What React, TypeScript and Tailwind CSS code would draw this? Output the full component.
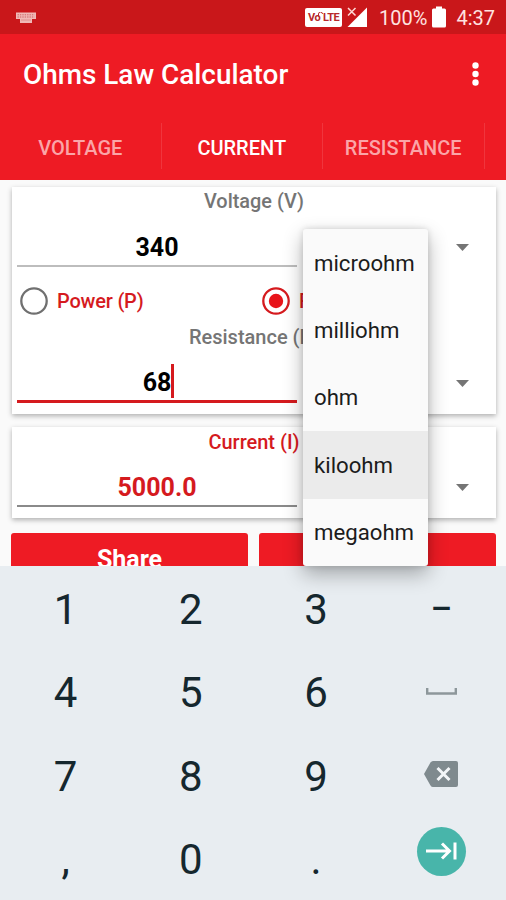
import { useState, ReactNode } from 'react'
import clsx from 'clsx'

const TABS = ['VOLTAGE', 'CURRENT', 'RESISTANCE']
const UNITS = ['microohm', 'milliohm', 'ohm', 'kiloohm', 'megaohm']

function StatusBar() {
  return (
    <div className="flex h-[34px] items-center bg-[#c9171a] text-[#ffe3e0]">
      <svg className="ml-4 mt-px" width="20" height="12" viewBox="0 0 20 12">
        <path d="M0 0.5h20v6.5h-4v4H4V7H0z" fill="#f0b9b6" />
        <path d="M1.5 2.8h17M1.5 5h17" stroke="#c9575a" strokeWidth="0.9" strokeDasharray="1.4 1" />
        <path d="M5 8h10" stroke="#d98583" strokeWidth="0.8" />
      </svg>
      <div className="ml-auto flex h-[19px] w-[37px] items-center justify-center rounded-[2px] bg-white text-[11px] font-bold leading-none tracking-[-0.6px] text-[#b8282b]">
        Vo
        <svg className="-ml-[2px] -mt-[6px]" width="5" height="5" viewBox="0 0 5 5">
          <path d="M0.5 4.5V2a2 2 0 0 1 4 0" fill="none" stroke="#b8282b" strokeWidth="1" />
        </svg>
        LTE
      </div>
      <svg className="ml-[5px]" width="20" height="20" viewBox="0 0 20 20">
        <path d="M20 0.5V20H0.5z" fill="#fff" />
        <path d="M1 1l7.500 7.500M8.500 1L1 8.500" stroke="#ffd9d6" strokeWidth="1.500" />
      </svg>
      <span className="ml-3 pt-[2px] text-[20px] leading-none">100%</span>
      <svg className="ml-[5px]" width="14" height="22" viewBox="0 0 14 22">
        <path d="M4 0.5h6V2.5h2.5q1.5 0 1.5 1.5V20q0 1.500-1.500 1.500H1.500Q0 21.500 0 20V4q0-1.500 1.500-1.500H4z" fill="#fff" />
      </svg>
      <span className="ml-[10px] mr-[11px] pt-[2px] text-[20px] leading-none">4:37</span>
    </div>
  )
}

function Caret() {
  return (
    <svg className="mr-[27px] mt-1" width="13" height="7" viewBox="0 0 13 7">
      <path d="M0 0h13L6.500 7z" fill="#757575" />
    </svg>
  )
}

function Field({ children, lineClass }: { children: ReactNode; lineClass: string }) {
  return (
    <div className="flex h-[44px] items-center justify-between">
      <div className={clsx('ml-[5px] flex h-[44px] w-[280px] items-center justify-center text-[25px] font-bold leading-none', lineClass)}>
        {children}
      </div>
      <Caret />
    </div>
  )
}

function Radio({ checked, label, onClick }: { checked: boolean; label: string; onClick: () => void }) {
  return (
    <button
      className="flex w-[234px] items-center whitespace-nowrap pt-px text-[20px] font-medium tracking-[-0.2px] text-[#d51a1e]"
      onClick={onClick}
    >
      <svg className="mr-[9px] shrink-0" width="28" height="28" viewBox="0 0 28 28">
        <circle cx="14" cy="14" r="12.700" fill="none" stroke={checked ? '#d51a1e' : '#707070'} strokeWidth="2.300" />
        {checked && <circle cx="14" cy="14" r="7.200" fill="#e8141a" />}
      </svg>
      {label}
    </button>
  )
}

function Key({ children }: { children: ReactNode }) {
  return <button className="flex items-center justify-center pt-[4px] text-[42px] leading-none">{children}</button>
}

export default function App() {
  const [tab, setTab] = useState('CURRENT')
  const [known, setKnown] = useState('resistance')
  const [unit, setUnit] = useState('kiloohm')

  return (
    <div className="relative flex h-[900px] w-[506px] flex-col overflow-hidden bg-[#fafafa] font-['Roboto',sans-serif]">
      <StatusBar />

      {/* App bar */}
      <header className="h-[146px] bg-[#ee1b24] text-white">
        <div className="flex h-[82px] items-center justify-between pl-[23px] pr-[27px]">
          <h1 className="text-[27.900px] font-medium leading-none">Ohms Law Calculator</h1>
          <svg className="-mt-[2px]" width="7" height="24" viewBox="0 0 7 24">
            <circle cx="3.500" cy="3.500" r="3.200" fill="#fff" />
            <circle cx="3.500" cy="12" r="3.200" fill="#fff" />
            <circle cx="3.500" cy="20.500" r="3.200" fill="#fff" />
          </svg>
        </div>
        <nav className="flex h-[60px] items-center">
          {TABS.map((name) => (
            <button
              key={name}
              onClick={() => setTab(name)}
              className={clsx(
                'h-[46px] w-[161.500px] border-r border-[#f0353d] pt-[3px] text-[20px] font-medium',
                tab === name ? 'text-white' : 'text-[#fba5a8]'
              )}
            >
              {name}
            </button>
          ))}
        </nav>
      </header>

      {/* Form */}
      <main className="h-[386px] overflow-hidden pl-3 pr-[10px] pt-[7px]">
        <section className="h-[227px] bg-white shadow-[0_2px_5px_rgba(0,0,0,0.3)]">
          <div className="h-[36px] pt-[3px] text-center text-[19.900px] font-medium leading-6 text-[#757575]">Voltage (V)</div>
          <Field lineClass="border-b-2 border-[#bdbdbd] pt-[7px] text-black">340</Field>
          <div className="flex h-[67px] items-center justify-between pb-px pl-2">
            <Radio checked={known === 'power'} label="Power (P)" onClick={() => setKnown('power')} />
            <Radio checked={known === 'resistance'} label="Resistance (R)" onClick={() => setKnown('resistance')} />
          </div>
          <div className="-mt-[8px] h-[33px] text-center text-[20px] font-medium leading-[23px] text-[#757575]">Resistance (R)</div>
          <Field lineClass="border-b-[3px] border-[#d51a1e] pt-[5px] text-black">
            68
            <span className="-mr-[3px] -mt-[2px] h-[34px] w-[3px] shrink-0 bg-[#d51a1e]" />
          </Field>
        </section>

        <section className="mt-[13px] h-[91px] bg-white shadow-[0_2px_5px_rgba(0,0,0,0.3)]">
          <div className="h-[36px] pt-[3px] text-center text-[20px] font-medium leading-6 text-[#d51a1e]">Current (I)</div>
          <Field lineClass="border-b-2 border-[#8a8a8a] pt-[7px] text-[#d51a1e]">5000.0</Field>
        </section>

        <div className="-ml-px mt-[15px] flex gap-[11px]">
          <button className="h-[54px] flex-1 rounded-[3px] bg-[#ee1b24] text-[25px] font-bold text-white">Share</button>
          <button className="h-[54px] flex-1 rounded-[3px] bg-[#ee1b24] text-[25px] font-bold text-white" />
        </div>
      </main>

      {/* Numeric keyboard */}
      <div className="grid h-[334px] grid-cols-4 grid-rows-4 bg-[#e8edf1] pl-[3px] pr-[2px] text-[#15272e]">
        <Key>1</Key>
        <Key>2</Key>
        <Key>3</Key>
        <Key>
          <span className="-mt-[2px] text-[33px] font-medium">–</span>
        </Key>
        <Key>4</Key>
        <Key>5</Key>
        <Key>6</Key>
        <Key>
          <svg className="-mt-[4px]" width="31" height="7" viewBox="0 0 31 7">
            <path d="M1.200 0v5.500h28.600V0" fill="none" stroke="#8d979b" strokeWidth="2.400" />
          </svg>
        </Key>
        <Key>7</Key>
        <Key>8</Key>
        <Key>9</Key>
        <Key>
          <svg className="-mt-[5px]" width="34" height="26" viewBox="0 0 34 26">
            <path d="M9 0H32Q34 0 34 2V24Q34 26 32 26H9Q7.500 26 6.500 24.500L0 13L6.500 1.500Q7.500 0 9 0Z" fill="#7f8a8e" />
            <path d="M13.500 7l12 12M25.500 7l-12 12" stroke="#f3f6f8" strokeWidth="3" />
          </svg>
        </Key>
        <Key>,</Key>
        <Key>0</Key>
        <Key>.</Key>
        <Key>
          <span className="-mt-[18px] flex size-[49px] items-center justify-center rounded-full bg-[#48b5aa]">
            <svg width="31" height="18" viewBox="0 0 31 18">
              <path d="M0 9h23M16 1.500L23.500 9L16 16.500M29 0.500v17" fill="none" stroke="#fff" strokeWidth="3" />
            </svg>
          </span>
        </Key>
      </div>

      {/* Unit dropdown */}
      <ul className="absolute left-[302.500px] top-[229px] w-[125.500px] rounded-[3px] bg-[#fafafa] shadow-[0_8px_20px_rgba(0,0,0,0.3),0_0_6px_rgba(0,0,0,0.14)]">
        {UNITS.map((name) => (
          <li
            key={name}
            onClick={() => setUnit(name)}
            className={clsx(
              'flex h-[67.400px] items-center pl-[11.500px] text-[22.200px] leading-none text-[#1c1c1c]',
              unit === name && 'bg-[#ebebeb]'
            )}
          >
            {name}
          </li>
        ))}
      </ul>
    </div>
  )
}
